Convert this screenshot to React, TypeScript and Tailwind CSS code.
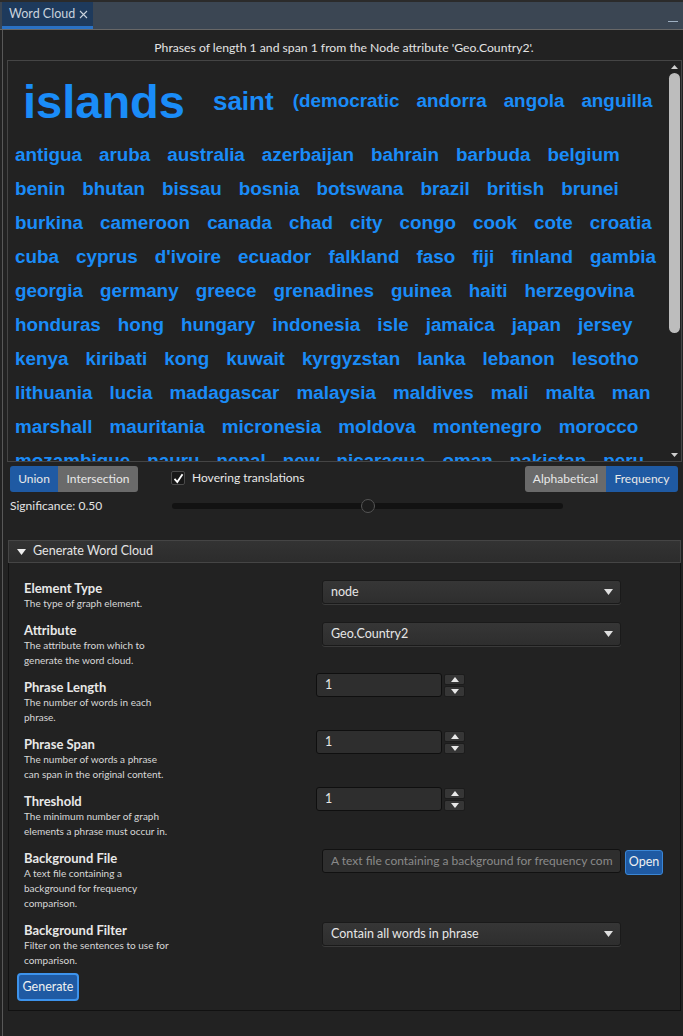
import React from "react";

const UI = "font-['Lato','Liberation_Sans',sans-serif]";

const ROWS: string[][] = [
  ["antigua", "aruba", "australia", "azerbaijan", "bahrain", "barbuda", "belgium"],
  ["benin", "bhutan", "bissau", "bosnia", "botswana", "brazil", "british", "brunei"],
  ["burkina", "cameroon", "canada", "chad", "city", "congo", "cook", "cote", "croatia"],
  ["cuba", "cyprus", "d'ivoire", "ecuador", "falkland", "faso", "fiji", "finland", "gambia"],
  ["georgia", "germany", "greece", "grenadines", "guinea", "haiti", "herzegovina"],
  ["honduras", "hong", "hungary", "indonesia", "isle", "jamaica", "japan", "jersey"],
  ["kenya", "kiribati", "kong", "kuwait", "kyrgyzstan", "lanka", "lebanon", "lesotho"],
  ["lithuania", "lucia", "madagascar", "malaysia", "maldives", "mali", "malta", "man"],
  ["marshall", "mauritania", "micronesia", "moldova", "montenegro", "morocco"],
  ["mozambique", "nauru", "nepal", "new", "nicaragua", "oman", "pakistan", "peru"],
];

function Caret({ className = "" }: { className?: string }) {
  return (
    <svg width="9" height="6" viewBox="0 0 9 6" className={className}>
      <path d="M0 0 L9 0 L4.5 6 Z" fill="currentColor" />
    </svg>
  );
}

function Combo({ value }: { value: string }) {
  return (
    <div className="w-[299px] h-[24px] rounded-[3px] border border-[#1a1a1a] bg-gradient-to-b from-[#363636] to-[#2e2e2e] shadow-[0_1px_0_#3a3a3a] flex items-center pl-[8px] pr-[7px] text-[12.5px] text-[#e6e6e6]">
      <span className="flex-1">{value}</span>
      <Caret className="text-[#e0e0e0]" />
    </div>
  );
}

function Spinner() {
  return (
    <div className="flex items-start -ml-[6px] -mt-[6px] gap-[2px]">
      <div className="w-[126px] h-[24px] rounded-[3px] border border-[#0f0f0f] bg-[#2e2e2e] flex items-center pl-[8px] text-[12.5px] text-[#e6e6e6]">
        1
      </div>
      <div className="flex flex-col gap-[1px] pt-[1px]">
        <div className="w-[21px] h-[11px] rounded-[2px] border border-[#1c1c1c] bg-[#363636] grid place-items-center text-[#e8e8e8]">
          <svg width="8" height="5" viewBox="0 0 8 5"><path d="M0 5 L8 5 L4 0 Z" fill="currentColor" /></svg>
        </div>
        <div className="w-[21px] h-[11px] rounded-[2px] border border-[#1c1c1c] bg-[#363636] grid place-items-center text-[#e8e8e8]">
          <svg width="8" height="5" viewBox="0 0 8 5"><path d="M0 0 L8 0 L4 5 Z" fill="currentColor" /></svg>
        </div>
      </div>
    </div>
  );
}

function Field({ label, desc, children }: { label: string; desc: string[]; children: React.ReactNode }) {
  return (
    <div className="flex items-start">
      <div className="w-[298px] shrink-0">
        <div className="h-[16px] leading-[16px] text-[13px] font-bold text-[#e8e8e8]">{label}</div>
        {desc.map((d) => (
          <div key={d} className="h-[15px] leading-[15px] text-[10px] text-[#d8d8d8]">{d}</div>
        ))}
      </div>
      {children}
    </div>
  );
}

export default function App() {
  return (
    <div className={`w-[683px] h-[1036px] bg-[#222222] flex flex-col overflow-hidden ${UI}`}>
      <div className="h-[2px] bg-[#2b2b2b]" />
      {/* tab bar */}
      <div className="h-[27px] bg-[#3b4653] flex items-stretch">
        <div className="ml-[2px] w-[91px] bg-[#1e3a5c] border-b-[3px] border-[#2a72c6] flex items-center pl-[7px] gap-[4px] text-[12.5px] text-[#c9d2dc]">
          <span>Word Cloud</span>
          <svg width="9" height="9" viewBox="0 0 9 9" className="mt-[1px]"><path d="M1 1 L8 8 M8 1 L1 8" stroke="#c9d2dc" strokeWidth="1.1" /></svg>
        </div>
        <div className="flex-1" />
        <div className="w-[10px] h-[1px] bg-[#9fb0c2] mt-[19px] mr-[5px]" />
      </div>
      <div className="h-[1px] bg-[#676767]" />

      {/* body */}
      <div className="flex-1 ml-[2px] border-l border-[#585858] flex flex-col">
        <div className="pt-[10px] pb-[4px] h-[30px] leading-[16px] text-center text-[12.2px] text-[#e4e4e4] pl-[2px]">
          Phrases of length 1 and span 1 from the Node attribute 'Geo.Country2'.
        </div>

        {/* word cloud */}
        <div className="ml-[4px] mr-[1px] h-[402px] border border-[#454545] bg-[#222222] flex">
          <div className="flex-1 overflow-hidden pl-[7px] pt-[3px] font-['Liberation_Sans',Arial,sans-serif] font-bold text-[#1a8cf8] leading-none">
            <div className="h-[74px] flex items-center gap-[17px] whitespace-nowrap">
              <span className="ml-[8px] mr-[11px] text-[47px]">islands</span>
              <span className="text-[26px] mr-[2px]">saint</span>
              <span className="text-[18.85px]">(democratic</span>
              <span className="text-[18.85px]">andorra</span>
              <span className="text-[18.85px]">angola</span>
              <span className="text-[18.85px]">anguilla</span>
            </div>
            {ROWS.map((r, i) => (
              <div key={i} className="h-[34px] flex items-center gap-[17px] whitespace-nowrap text-[18.85px]">
                {r.map((w) => (
                  <span key={w}>{w}</span>
                ))}
              </div>
            ))}
          </div>
          <div className="w-[14px] flex flex-col items-center pt-[4px] pb-[4px]">
            <svg width="7" height="4" viewBox="0 0 7 4"><path d="M0 4 L7 4 L3.5 0 Z" fill="#cfcfcf" /></svg>
            <div className="mt-[4px] w-[11px] h-[260px] rounded-full bg-[#bdbdbd]" />
            <div className="flex-1" />
            <svg width="7" height="4" viewBox="0 0 7 4"><path d="M0 0 L7 0 L3.5 4 Z" fill="#cfcfcf" /></svg>
          </div>
        </div>

        {/* controls */}
        <div className="mt-[4px] h-[26px] flex items-center pl-[7px] pr-[5px] text-[12px] text-[#e8e8e8]">
          <div className="flex h-full">
            <div className="w-[48px] rounded-l-[3px] bg-[#1f5aa3] grid place-items-center">Union</div>
            <div className="w-[80px] rounded-r-[3px] bg-[#6a6a6a] grid place-items-center">Intersection</div>
          </div>
          <div className="ml-[33px] flex items-center gap-[7px] -mt-[2px]">
            <div className="w-[14px] h-[14px] rounded-[2px] border border-[#4a4a4a] bg-[#171717] grid place-items-center">
              <svg width="11" height="11" viewBox="0 0 11 11"><path d="M1.5 5.8 L4.3 9 L9.5 1.2" stroke="#ffffff" strokeWidth="1.8" fill="none" /></svg>
            </div>
            <span>Hovering translations</span>
          </div>
          <div className="flex-1" />
          <div className="flex h-full">
            <div className="w-[81px] rounded-l-[3px] bg-[#6a6a6a] grid place-items-center">Alphabetical</div>
            <div className="w-[72px] rounded-r-[3px] bg-[#1f5aa3] grid place-items-center">Frequency</div>
          </div>
        </div>

        <div className="mt-[2px] h-[24px] flex items-center pl-[7px] text-[12px] text-[#e4e4e4]">
          <span className="w-[162px]">Significance: 0.50</span>
          <div className="w-[391px] h-[6px] rounded-full bg-[#121212] relative">
            <div className="absolute left-[189px] -top-[4px] w-[14px] h-[14px] rounded-full bg-[#1c1c1c] border border-[#555555]" />
          </div>
        </div>

        {/* titled pane */}
        <div className="mt-[22px] ml-[5px] mr-[2px] flex flex-col">
          <div className="h-[23px] border border-[#454545] bg-gradient-to-b from-[#333333] to-[#2c2c2c] flex items-center pl-[8px] gap-[7px] text-[12.5px] text-[#e4e4e4]">
            <Caret className="text-[#eeeeee]" />
            <span>Generate Word Cloud</span>
          </div>
          <div className="border-x border-b border-[#111111] bg-[#222222] pt-[17px] pl-[15px] pb-[9px] flex flex-col gap-[11px]">
            <Field label="Element Type" desc={["The type of graph element."]}>
              <Combo value="node" />
            </Field>
            <Field label="Attribute" desc={["The attribute from which to", "generate the word cloud."]}>
              <Combo value="Geo.Country2" />
            </Field>
            <Field label="Phrase Length" desc={["The number of words in each", "phrase."]}>
              <Spinner />
            </Field>
            <Field label="Phrase Span" desc={["The number of words a phrase", "can span in the original content."]}>
              <Spinner />
            </Field>
            <Field label="Threshold" desc={["The minimum number of graph", "elements a phrase must occur in."]}>
              <Spinner />
            </Field>
            <Field label="Background File" desc={["A text file containing a", "background for frequency", "comparison."]}>
              <div className="flex items-start gap-[4px] -mt-[1px]">
                <div className="w-[299px] h-[24px] rounded-[3px] border border-[#111111] bg-[#2e2e2e] flex items-center pl-[8px] text-[12px] text-[#8a8a8a] whitespace-nowrap overflow-hidden">
                  A text file containing a background for frequency com
                </div>
                <div className="mt-[1px] w-[38px] h-[25px] rounded-[3px] border border-[#3a86d6] bg-[#1f5aa3] grid place-items-center text-[12.5px] text-[#f0f0f0]">Open</div>
              </div>
            </Field>
            <Field label="Background Filter" desc={["Filter on the sentences to use for", "comparison."]}>
              <Combo value="Contain all words in phrase" />
            </Field>
            <div className="-mt-[6px] -ml-[7px] w-[62px] h-[28px] rounded-[4px] border-2 border-[#3d93ec] bg-[#1f5aa3] grid place-items-center text-[12.5px] text-[#f0f0f0]">
              Generate
            </div>
          </div>
        </div>
      </div>
    </div>
  );
}
